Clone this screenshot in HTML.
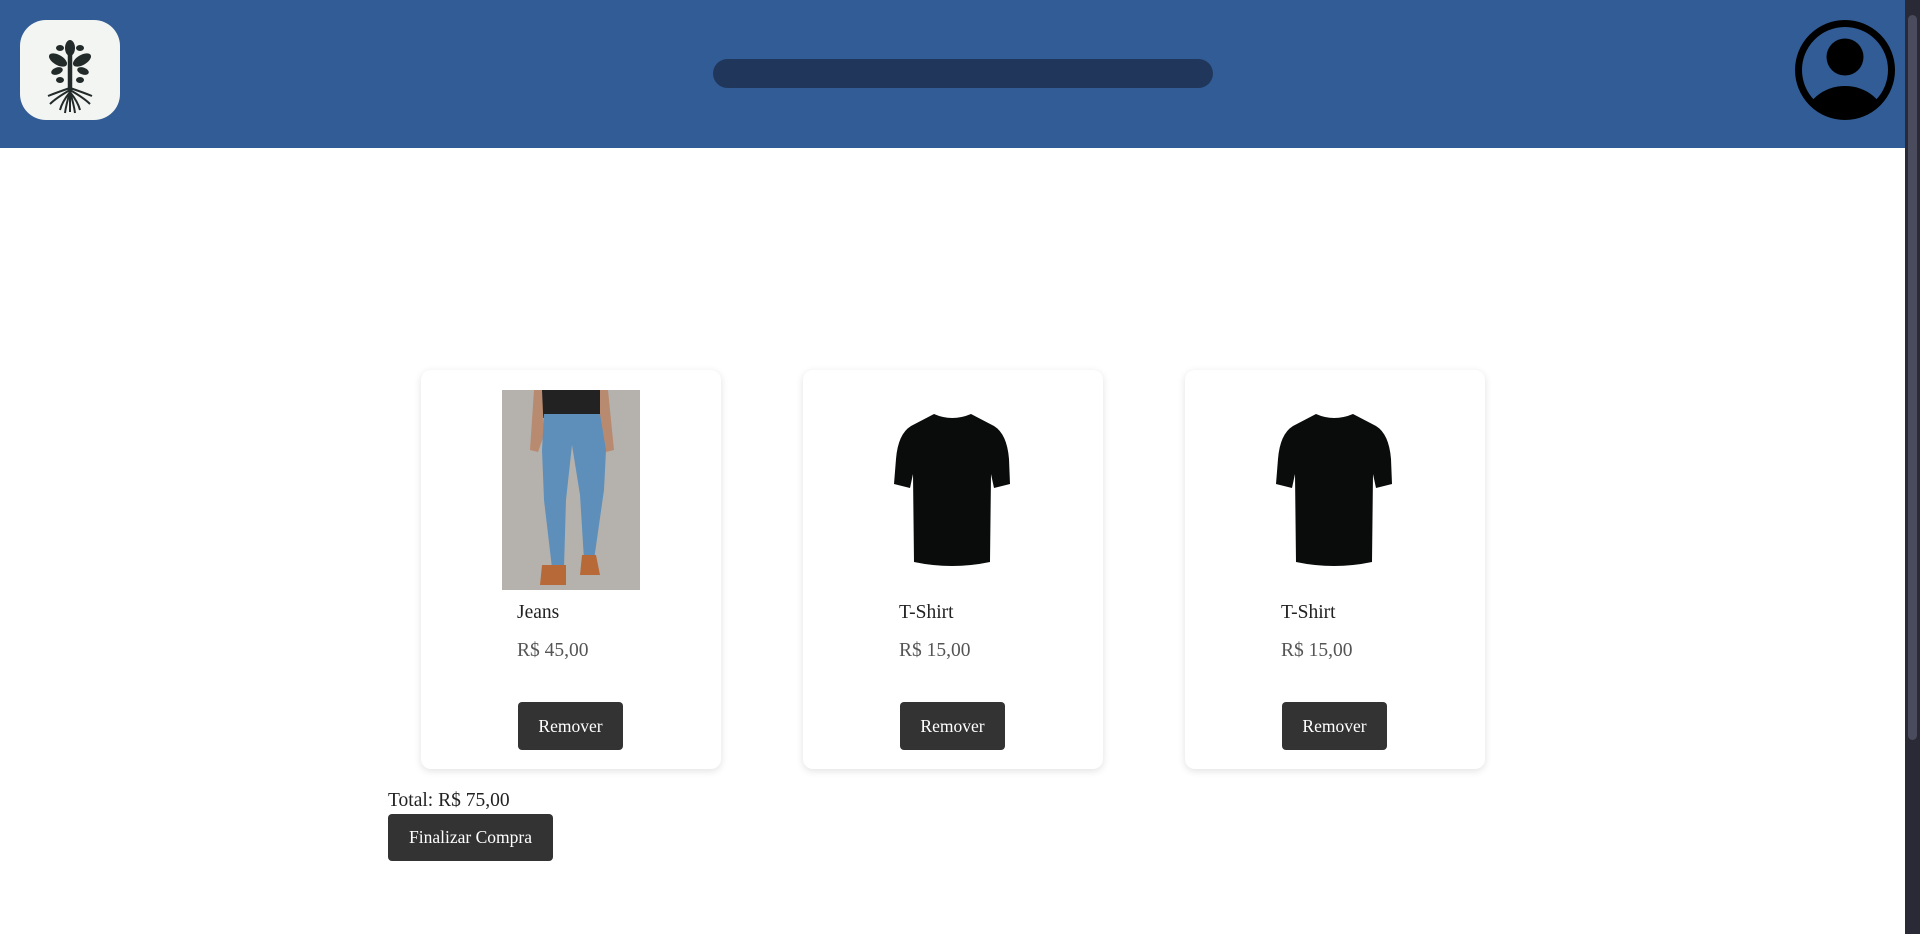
<!DOCTYPE html>
<html><head><meta charset="utf-8"><style>
*{box-sizing:border-box;margin:0;padding:0}
body{width:1920px;height:934px;overflow:hidden;background:#fff;font-family:"Liberation Serif",serif;position:relative}
.hdr{position:absolute;left:0;top:0;width:1905px;height:148px;background:#325c96}
.logo{position:absolute;left:20px;top:20px;width:100px;height:100px;border-radius:26px;background:#f3f5f2}
.search{position:absolute;left:713px;top:59px;width:500px;height:29px;border-radius:15px;background:#20375b}
.sb{position:absolute;left:1905px;top:0;width:15px;height:934px;background:#2a2a36}
.thumb{position:absolute;left:1908px;top:15px;width:9px;height:725px;border-radius:5px;background:#4b4b5e}
.card{position:absolute;top:370px;width:300px;height:399px;background:#fff;border-radius:10px;box-shadow:0 2px 8px rgba(0,0,0,.12)}
.card .name{position:absolute;left:96px;top:232px;font-size:19.5px;color:#222}
.card .price{position:absolute;left:96px;top:270px;font-size:19.5px;color:#555}
.btn{position:absolute;background:#333;color:#fff;border-radius:4px;font-size:17.5px;display:flex;align-items:center;justify-content:center}
.card .btn{left:97px;top:332px;width:105px;height:48px}
</style></head><body>
<div class="hdr">
<div class="logo"><svg width="100" height="100" viewBox="0 0 100 100">
<g fill="#222a2a" stroke="#222a2a">
<path d="M50 32 L50 72" stroke-width="4.5" fill="none"/>
<ellipse cx="50" cy="28" rx="5" ry="8" stroke="none"/>
<ellipse cx="38" cy="40" rx="10" ry="5" transform="rotate(30 38 40)" stroke="none"/>
<ellipse cx="62" cy="40" rx="10" ry="5" transform="rotate(-30 62 40)" stroke="none"/>
<ellipse cx="37" cy="51" rx="6" ry="3.5" transform="rotate(-20 37 51)" stroke="none"/>
<ellipse cx="63" cy="51" rx="6" ry="3.5" transform="rotate(20 63 51)" stroke="none"/>
<ellipse cx="40" cy="28" rx="4" ry="3" stroke="none"/><ellipse cx="60" cy="28" rx="4" ry="3" stroke="none"/>
<ellipse cx="40" cy="60" rx="4" ry="3" stroke="none"/><ellipse cx="60" cy="60" rx="4" ry="3" stroke="none"/>
<path d="M50 68 Q38 72 28 76 M50 68 Q62 72 72 76 M50 70 Q36 78 30 84 M50 70 Q64 78 70 84 M50 72 Q42 82 40 90 M50 72 Q58 82 60 90 M50 72 L50 92 M50 72 Q46 85 45 93 M50 72 Q54 85 55 93" stroke-width="2" fill="none"/>
</g></svg></div>
<div class="search"></div>
<svg style="position:absolute;left:1795px;top:20px" width="100" height="100" viewBox="0 0 100 100">
<defs><clipPath id="c"><circle cx="50" cy="50" r="46"/></clipPath></defs>
<circle cx="50" cy="50" r="46.5" fill="none" stroke="#000" stroke-width="7"/>
<circle cx="50" cy="37" r="18.5" fill="#000"/>
<ellipse cx="50" cy="100" rx="40" ry="34" fill="#000" clip-path="url(#c)"/>
</svg>
</div>
<div class="sb"></div><div class="thumb"></div>

<div class="card" style="left:421px">
<svg style="position:absolute;left:81px;top:20px" width="138" height="200" viewBox="0 0 138 200">
<rect width="138" height="200" fill="#b5b2ad"/>
<rect x="40" y="0" width="62" height="28" fill="#222"/>
<path d="M32 0 L40 0 L42 45 L36 62 L28 60 Z" fill="#b88a70"/>
<path d="M98 0 L106 0 L112 60 L104 62 L98 45 Z" fill="#b88a70"/>
<path d="M42 24 L98 24 L104 60 L102 100 L92 170 L82 170 L78 105 L70 55 L64 110 L62 178 L50 178 L42 110 L40 60 Z" fill="#5e8fba"/>
<path d="M40 175 L64 175 L64 195 L38 195 Z" fill="#b76a38"/>
<path d="M80 165 L94 165 L98 185 L78 185 Z" fill="#b76a38"/>
</svg>
<div class="name">Jeans</div><div class="price">R$ 45,00</div>
<div class="btn">Remover</div></div>

<div class="card" style="left:803px">
<svg style="position:absolute;left:91px;top:44px" width="117" height="152" viewBox="0 0 117 152">
<path d="M40 0 Q58 8 77 0 L100 12 Q113 20 115 45 L116 70 L100 74 L97 60 L96 148 Q58 156 20 148 L19 60 L16 74 L0 70 L2 45 Q4 20 17 12 Z" fill="#0a0b0b"/>
</svg>
<div class="name">T-Shirt</div><div class="price">R$ 15,00</div>
<div class="btn">Remover</div></div>

<div class="card" style="left:1185px">
<svg style="position:absolute;left:91px;top:44px" width="117" height="152" viewBox="0 0 117 152">
<path d="M40 0 Q58 8 77 0 L100 12 Q113 20 115 45 L116 70 L100 74 L97 60 L96 148 Q58 156 20 148 L19 60 L16 74 L0 70 L2 45 Q4 20 17 12 Z" fill="#0a0b0b"/>
</svg>
<div class="name">T-Shirt</div><div class="price">R$ 15,00</div>
<div class="btn">Remover</div></div>

<div style="position:absolute;left:388px;top:790px;font-size:19.5px;color:#222">Total: R$ 75,00</div>
<div class="btn" style="left:388px;top:814px;width:165px;height:47px">Finalizar Compra</div>
</body></html>
